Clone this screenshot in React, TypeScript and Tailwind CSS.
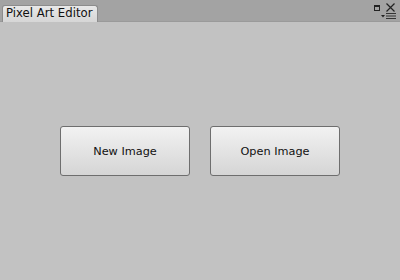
import React from "react";

export default function App() {
  return (
    <div className="w-[400px] h-[280px] flex flex-col bg-[#c2c2c2] overflow-hidden" style={{ fontFamily: '"DejaVu Sans", "Liberation Sans", sans-serif' }}>
      <div className="h-[22px] bg-[#a3a3a3] flex items-end justify-between pl-[2px] relative border-b border-[#9a9a9a]">
        <div className="h-[17px] w-[96px] -mb-px rounded-t-[3px] border border-b-0 border-[#8c8c8c] bg-gradient-to-b from-[#e8e8e8] to-[#d6d6d6] flex items-center pl-[3px] text-[11.7px] text-[#111] leading-none whitespace-nowrap">
          Pixel Art Editor
        </div>
        <div className="absolute left-[374px] top-[3px] flex items-center gap-[6px]">
          <svg width="6" height="6" viewBox="0 0 6 6">
            <rect x="0.5" y="0.5" width="5" height="5" fill="none" stroke="#222" />
            <rect x="0" y="0" width="6" height="2" fill="#222" />
          </svg>
          <svg width="9" height="9" viewBox="0 0 9 9">
            <path d="M0.5 0.5 L8.5 8.5 M8.5 0.5 L0.5 8.5" stroke="#222" strokeWidth="1.2" />
          </svg>
        </div>
        <div className="absolute left-[381px] top-[13px] flex items-center gap-[1px]">
          <svg width="4" height="3" viewBox="0 0 4 3">
            <path d="M0 0 L4 0 L2 2.5 Z" fill="#222" />
          </svg>
          <svg width="10" height="6" viewBox="0 0 10 6">
            <path d="M0 0.5 H10 M0 3 H10 M0 5.5 H10" stroke="#333" strokeWidth="1" />
          </svg>
        </div>
      </div>
      <div className="flex-1 flex items-center justify-center gap-[20px]">
        <button className="w-[130px] h-[50px] rounded-[3px] border border-[#6e6e6e] bg-gradient-to-b from-[#f2f2f2] to-[#d5d5d5] text-[11.3px] text-[#111] pt-[2px]">
          New Image
        </button>
        <button className="w-[130px] h-[50px] rounded-[3px] border border-[#6e6e6e] bg-gradient-to-b from-[#f2f2f2] to-[#d5d5d5] text-[11.3px] text-[#111] pt-[2px]">
          Open Image
        </button>
      </div>
    </div>
  );
}
